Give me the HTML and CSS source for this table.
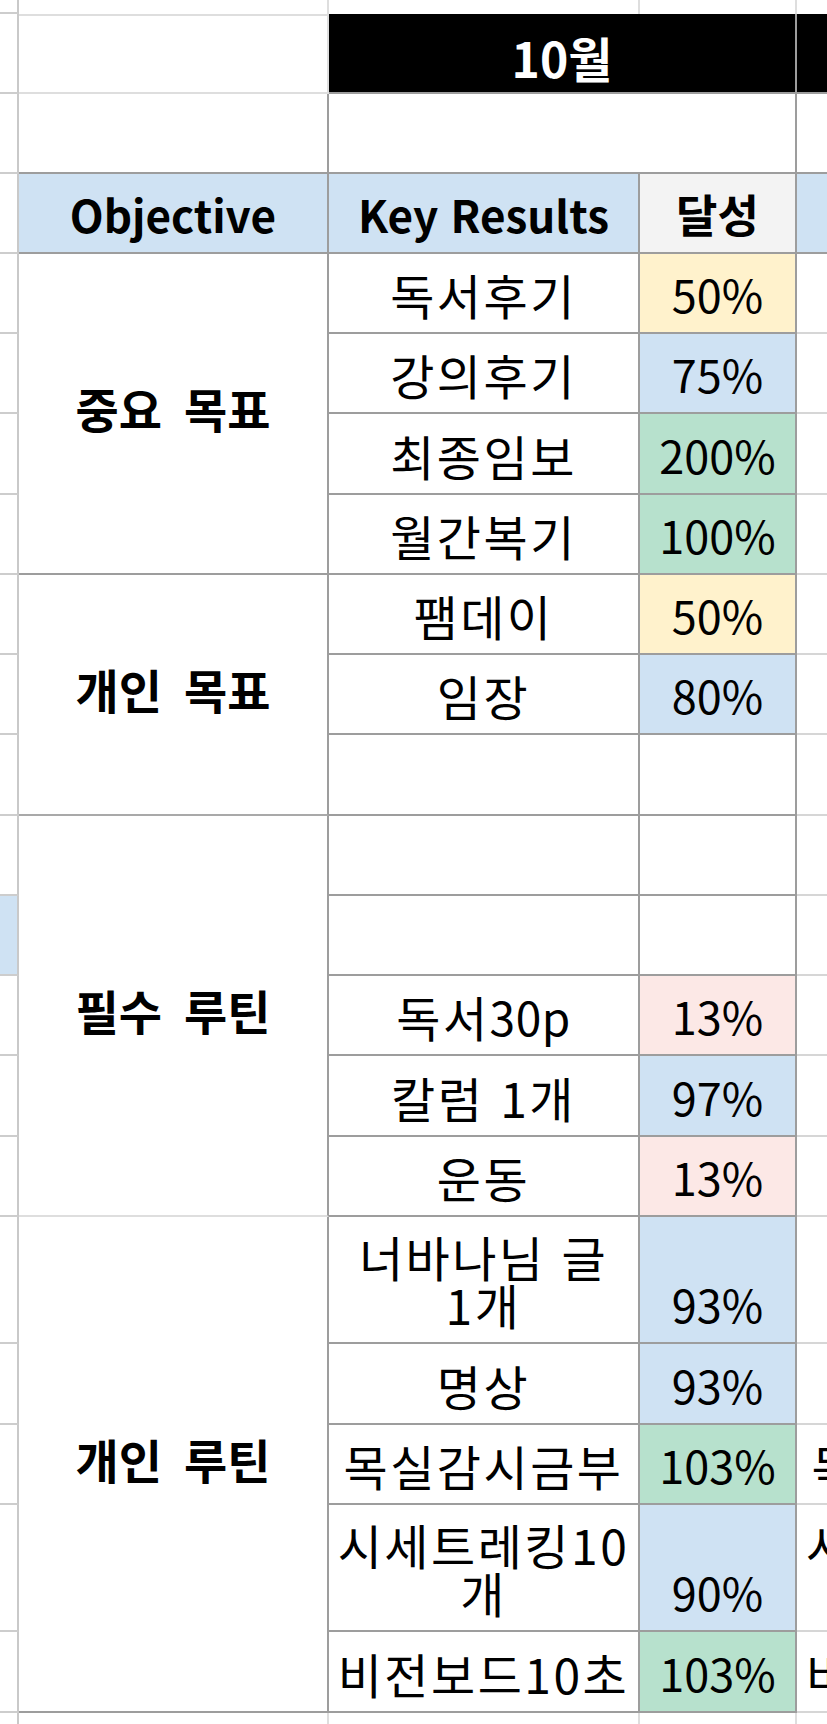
FILE: index.html
```html
<!DOCTYPE html>
<html lang="ko">
<head>
<meta charset="utf-8">
<title>OKR 10월</title>
<link rel="stylesheet" href="styles.css">
</head>
<body>
<div class="sheet">
  <!-- row 0 -->
  <div class="c ca"></div>
  <div class="c lr lb"></div>
  <div class="c lr lb"></div>
  <div class="c lr lb"></div>
  <div class="c lr lb"></div>
  <div class="c lr lb"></div>

  <!-- row 1 -->
  <div class="c ca"></div>
  <div class="c lr lb"></div>
  <div class="c span2 blk">10월</div>
  <div class="c span2 blk"></div>

  <!-- row 2 -->
  <div class="c ca"></div>
  <div class="c"></div>
  <div class="c span2"></div>
  <div class="c span2"></div>

  <!-- row 3: header -->
  <div class="c ca"></div>
  <div class="c hd blue">Objective</div>
  <div class="c hd blue">Key Results</div>
  <div class="c hd hk gray">달성</div>
  <div class="c hd blue"></div>
  <div class="c hd gray"></div>

  <!-- 중요 목표 -->
  <div class="c ca"></div>
  <div class="c obj rows4">중요 목표</div>
  <div class="c ko">독서후기</div>
  <div class="c yellow">50%</div>
  <div class="c nx"></div>
  <div class="c nx"></div>

  <div class="c ca"></div>
  <div class="c ko">강의후기</div>
  <div class="c blue">75%</div>
  <div class="c nx"></div>
  <div class="c nx"></div>

  <div class="c ca"></div>
  <div class="c ko">최종임보</div>
  <div class="c green">200%</div>
  <div class="c nx"></div>
  <div class="c nx"></div>

  <div class="c ca"></div>
  <div class="c ko">월간복기</div>
  <div class="c green">100%</div>
  <div class="c nx"></div>
  <div class="c nx"></div>

  <!-- 개인 목표 -->
  <div class="c ca"></div>
  <div class="c obj rows3 mb">개인 목표</div>
  <div class="c ko">팸데이</div>
  <div class="c yellow">50%</div>
  <div class="c nx"></div>
  <div class="c nx"></div>

  <div class="c ca"></div>
  <div class="c ko">임장</div>
  <div class="c blue">80%</div>
  <div class="c nx"></div>
  <div class="c nx"></div>

  <div class="c ca"></div>
  <div class="c"></div>
  <div class="c"></div>
  <div class="c nx"></div>
  <div class="c nx"></div>

  <!-- 필수 루틴 -->
  <div class="c ca"></div>
  <div class="c obj rows5 lb">필수 루틴</div>
  <div class="c"></div>
  <div class="c"></div>
  <div class="c nx"></div>
  <div class="c nx"></div>

  <div class="c ca ablue"></div>
  <div class="c"></div>
  <div class="c"></div>
  <div class="c nx"></div>
  <div class="c nx"></div>

  <div class="c ca"></div>
  <div class="c ko">독서<span class="lat">30p</span></div>
  <div class="c pink">13%</div>
  <div class="c nx"></div>
  <div class="c nx"></div>

  <div class="c ca"></div>
  <div class="c ko">칼럼 1개</div>
  <div class="c blue">97%</div>
  <div class="c nx"></div>
  <div class="c nx"></div>

  <div class="c ca"></div>
  <div class="c ko">운동</div>
  <div class="c pink">13%</div>
  <div class="c nx"></div>
  <div class="c nx"></div>

  <!-- 개인 루틴 -->
  <div class="c ca"></div>
  <div class="c obj rows5">개인 루틴</div>
  <div class="c ko">너바나님 글<br>1개</div>
  <div class="c blue">93%</div>
  <div class="c nx"></div>
  <div class="c nx"></div>

  <div class="c ca"></div>
  <div class="c ko">명상</div>
  <div class="c blue">93%</div>
  <div class="c nx"></div>
  <div class="c nx"></div>

  <div class="c ca"></div>
  <div class="c ko">목실감시금부</div>
  <div class="c green">103%</div>
  <div class="c nx ko">목실감시금부</div>
  <div class="c nx"></div>

  <div class="c ca"></div>
  <div class="c ko">시세트레킹10<br>개</div>
  <div class="c blue">90%</div>
  <div class="c nx ko">시세트레킹10<br>개</div>
  <div class="c nx"></div>

  <div class="c ca"></div>
  <div class="c ko">비전보드10초</div>
  <div class="c green">103%</div>
  <div class="c nx ko">비전보드10초</div>
  <div class="c nx"></div>

  <!-- trailing row -->
  <div class="c ca"></div>
  <div class="c lr lb"></div>
  <div class="c lr lb"></div>
  <div class="c lr lb"></div>
  <div class="c lr lb"></div>
  <div class="c lr lb"></div>
</div>
</body>
</html>
```

FILE: styles.css
```css
html, body {
  margin: 0;
  padding: 0;
  overflow: hidden;
  background: #ffffff;
}

body {
  font-family: "Noto Sans CJK KR", "Noto Sans", sans-serif;
  color: #000000;
}

.sheet {
  display: grid;
  width: max-content;
  grid-template-columns: 19px 310px 311px 157px 311px 157px;
  grid-template-rows:
    14px 79.6px 80px 80.2px
    repeat(12, 80.25px)
    127.5px 80.25px 80.25px 127.5px 80.25px
    60px;
}

.c {
  box-sizing: border-box;
  min-width: 0;
  display: flex;
  align-items: flex-end;
  justify-content: center;
  text-align: center;
  padding: 0 4px 14px;
  font-size: 45px;
  line-height: 48px;
  white-space: nowrap;
  border-right: 2px solid #9d9d9d;
  border-bottom: 2px solid #9d9d9d;
}

/* Korean key-result text */
.ko {
  font-size: 48px;
  letter-spacing: 2.5px;
}
.lat {
  font-size: 46px;
  letter-spacing: 0.5px;
}

/* light gridlines */
.lr { border-right-color: #dedede; }
.lb { border-bottom-color: #dedede; }
.mb { border-bottom-color: #a9a9a9; }

/* previous column strip */
.ca {
  padding: 0;
  border-right-color: #c9c9c9;
  border-bottom-color: #cdcdcd;
}
.ablue { background: #cfe2f3; }

/* next month key results column */
.nx {
  border-bottom-color: #d6d6d6;
}

.span2 { grid-column: span 2; }
.rows3 { grid-row: span 3; }
.rows4 { grid-row: span 4; }
.rows5 { grid-row: span 5; }

.blk {
  background: #000000;
  color: #ffffff;
  font-weight: 700;
  font-size: 48px;
  padding-bottom: 11px;
}

.hd {
  font-weight: 700;
  font-size: 44px;
}
.hk { font-size: 45px; }

.obj {
  font-weight: 700;
  font-size: 47px;
  word-spacing: 9px;
  align-items: center;
  padding: 0 4px 10px;
}

.blue { background: #cfe2f3; }
.gray { background: #f3f3f3; }
.yellow { background: #fff2cc; }
.green { background: #b7e1cd; }
.pink { background: #fce8e6; }
```
